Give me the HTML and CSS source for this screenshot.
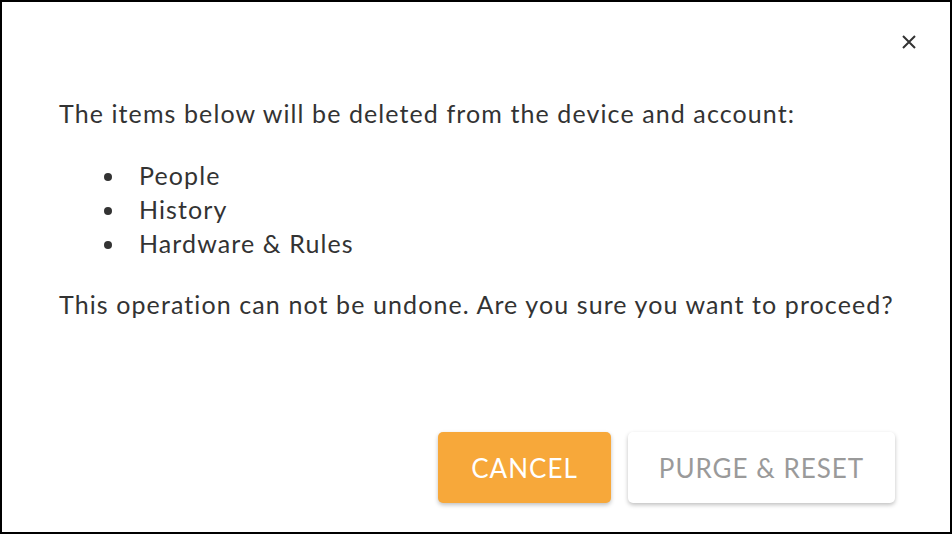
FILE: index.html
```html
<!DOCTYPE html>
<html>
<head>
<meta charset="utf-8">
<link rel="stylesheet" href="styles.css">
</head>
<body>
<div class="dialog">
  <button class="close" aria-label="Close">
    <svg width="16" height="16" viewBox="0 0 16 16"><path d="M2 2L14 14M14 2L2 14" stroke="#333" stroke-width="2" fill="none"/></svg>
  </button>
  <div class="content">
    <p class="lead">The items below will be deleted from the device and account:</p>
    <ul class="items">
      <li>People</li>
      <li>History</li>
      <li>Hardware &amp; Rules</li>
    </ul>
    <p class="warn">This operation can not be undone. Are you sure you want to proceed?</p>
  </div>
  <div class="actions">
    <button class="btn btn-primary">CANCEL</button>
    <button class="btn btn-secondary">PURGE &amp; RESET</button>
  </div>
</div>
</body>
</html>
```
FILE: styles.css
```css
html, body {
  margin: 0;
  padding: 0;
  background: #fff;
}
.dialog {
  position: relative;
  width: 952px;
  height: 534px;
  box-sizing: border-box;
  border: 2px solid #000;
  background: #fff;
  display: flex;
  flex-direction: column;
  font-family: Lato, "Open Sans", sans-serif;
  color: #333;
}
.close {
  position: absolute;
  top: 32px;
  right: 33px;
  width: 16px;
  height: 16px;
  padding: 0;
  border: 0;
  background: none;
  display: flex;
}
.content {
  padding: 94px 30px 0 57px;
  font-size: 25px;
  line-height: 34px;
  letter-spacing: 1.1px;
  flex: 1;
}
.content p {
  margin: 0;
}
.items {
  margin: 28px 0 27px;
  padding-left: 45px;
  list-style: none;
}
.items li {
  display: flex;
  align-items: flex-start;
}
.items li::before {
  content: "";
  flex: none;
  width: 8px;
  height: 8px;
  border-radius: 50%;
  background: #333;
  margin: 15px 27px 0 0;
}
.actions {
  display: flex;
  justify-content: flex-end;
  gap: 17px;
  padding: 0 55px 29px 0;
}
.btn {
  height: 71px;
  border: 0;
  border-radius: 5px;
  font-family: Lato, "Open Sans", sans-serif;
  font-size: 26px;
  letter-spacing: 1px;
  padding: 0;
  box-shadow: 0 2px 4px rgba(0, 0, 0, 0.25);
}
.btn-primary {
  width: 173px;
  background: #f7a83a;
  color: #fff;
}
.btn-secondary {
  width: 267px;
  background: #fff;
  color: #9a9a9a;
}
```
